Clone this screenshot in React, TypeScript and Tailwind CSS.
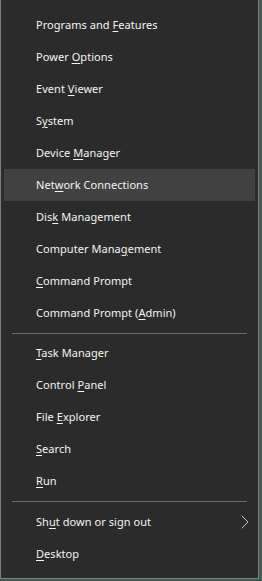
import { ChevronRight } from 'lucide-react'

type Item = { before: string; key: string; after: string; sub?: boolean; hover?: boolean }

const groups: Item[][] = [
  [
    { before: 'Programs and ', key: 'F', after: 'eatures' },
    { before: 'Power ', key: 'O', after: 'ptions' },
    { before: 'Event ', key: 'V', after: 'iewer' },
    { before: 'S', key: 'y', after: 'stem' },
    { before: 'Device ', key: 'M', after: 'anager' },
    { before: 'Net', key: 'w', after: 'ork Connections', hover: true },
    { before: 'Dis', key: 'k', after: ' Management' },
    { before: 'Computer Mana', key: 'g', after: 'ement' },
    { before: '', key: 'C', after: 'ommand Prompt' },
    { before: 'Command Prompt (', key: 'A', after: 'dmin)' },
  ],
  [
    { before: '', key: 'T', after: 'ask Manager' },
    { before: 'Control ', key: 'P', after: 'anel' },
    { before: 'File ', key: 'E', after: 'xplorer' },
    { before: '', key: 'S', after: 'earch' },
    { before: '', key: 'R', after: 'un' },
  ],
  [
    { before: 'Sh', key: 'u', after: 't down or sign out', sub: true },
    { before: '', key: 'D', after: 'esktop' },
  ],
]

function Row({ item }: { item: Item }) {
  return (
    <div
      className={`mx-[3px] h-8 flex items-center pl-[32px] ${
        item.hover ? 'bg-[#414141]' : ''
      }`}
    >
      <span className="flex-1 text-[11px] text-[#f4f4f4] tracking-[0.05px]">
        {item.before}
        <span className="underline underline-offset-[2px]">{item.key}</span>
        {item.after}
      </span>
      {item.sub && (
        <ChevronRight className="w-6 h-6 text-[#c4c4c4] -mr-[2px]" strokeWidth={1} />
      )}
    </div>
  )
}

export default function App() {
  return (
    <div
      className="w-[262px] h-[581px] bg-[#3f5a50] overflow-hidden"
      style={{ fontFamily: '"Noto Sans", "Open Sans", sans-serif' }}
    >
      <div className="w-[259px] h-[579px] bg-[#2b2b2b] border-l border-r border-b border-[#7a8488] pt-[9px]">
        {groups.map((g, gi) => (
          <div key={gi}>
            {gi === 1 && (
              <div className="h-2 flex items-center px-[11px]">
                <div className="h-px w-full bg-[#6b6b6b]" />
              </div>
            )}
            {gi === 2 && (
              <div className="h-[9px] flex items-center px-[11px]">
                <div className="h-px w-full bg-[#6b6b6b]" />
              </div>
            )}
            {g.map((it) => (
              <Row key={it.before + it.key + it.after} item={it} />
            ))}
          </div>
        ))}
      </div>
    </div>
  )
}
